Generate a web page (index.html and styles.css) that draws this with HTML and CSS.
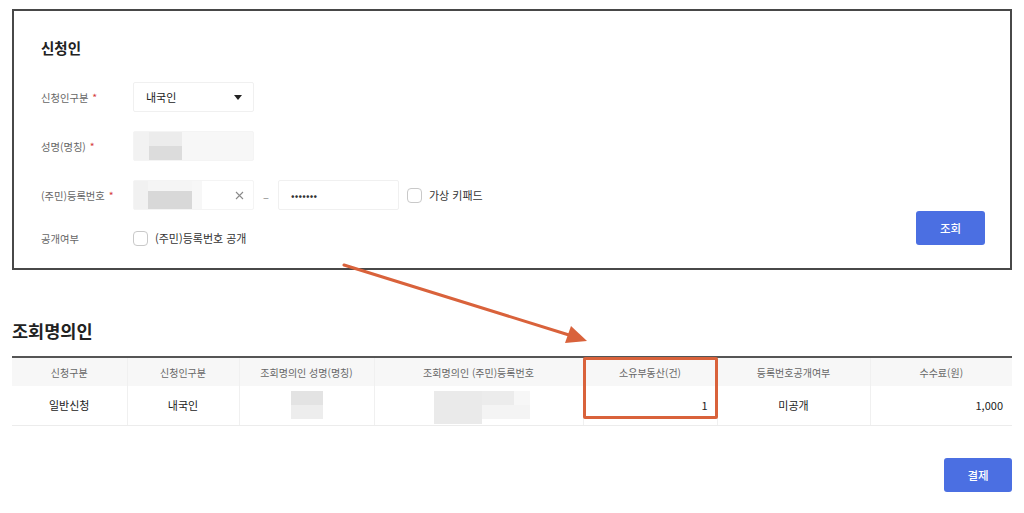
FILE: index.html
```html
<!DOCTYPE html>
<html lang="ko">
<head>
<meta charset="utf-8">
<title>신청인</title>
<link rel="stylesheet" href="styles.css">
</head>
<body>
<div class="page">
  <section class="panel">
    <div class="form">
      <h2 class="panel-title">신청인</h2>
      <div class="row">
        <div class="label">신청인구분 <span class="req">*</span></div>
        <div class="field select">
          <span>내국인</span>
          <span class="caret"></span>
        </div>
      </div>
      <div class="row">
        <div class="label">성명(명칭) <span class="req">*</span></div>
        <div class="field blur-name"></div>
      </div>
      <div class="row">
        <div class="label">(주민)등록번호 <span class="req">*</span></div>
        <div class="field blur-id">
          <span class="clear">
            <svg width="9" height="9" viewBox="0 0 9 9"><path d="M1 1L8 8M8 1L1 8" stroke="#8a8a8a" stroke-width="1.1" fill="none"/></svg>
          </span>
        </div>
        <span class="dash">–</span>
        <div class="field pw"><span class="dots">•••••••</span></div>
        <label class="check"><span class="box"></span><span class="check-text">가상 키패드</span></label>
      </div>
      <div class="row row-short">
        <div class="label">공개여부</div>
        <label class="check"><span class="box"></span><span class="check-text">(주민)등록번호 공개</span></label>
      </div>
    </div>
    <button class="btn btn-search">조회</button>
  </section>

  <section class="result">
    <h2 class="result-title">조회명의인</h2>
    <div class="table-wrap">
      <table class="grid">
        <colgroup>
          <col class="c1"><col class="c2"><col class="c3"><col class="c4"><col class="c5"><col class="c6"><col class="c7">
        </colgroup>
        <thead>
          <tr>
            <th>신청구분</th>
            <th>신청인구분</th>
            <th>조회명의인 성명(명칭)</th>
            <th>조회명의인 (주민)등록번호</th>
            <th>소유부동산(건)</th>
            <th>등록번호공개여부</th>
            <th>수수료(원)</th>
          </tr>
        </thead>
        <tbody>
          <tr>
            <td>일반신청</td>
            <td>내국인</td>
            <td><span class="mosaic m-name"></span></td>
            <td><span class="mosaic m-id"></span></td>
            <td class="num">1</td>
            <td>미공개</td>
            <td class="num">1,000</td>
          </tr>
        </tbody>
      </table>
      <div class="highlight"></div>
    </div>
    <div class="actions">
      <button class="btn btn-pay">결제</button>
    </div>
  </section>

  <svg class="arrow" width="1024" height="513" viewBox="0 0 1024 513">
    <line x1="344" y1="265" x2="569" y2="335" stroke="#d9623b" stroke-width="3" stroke-linecap="round"/>
    <polygon points="587,341 565,343 571,326" fill="#d9623b"/>
  </svg>
</div>
</body>
</html>
```

FILE: styles.css
```css
* { box-sizing: border-box; }
html, body {
  margin: 0;
  padding: 0;
  background: #fff;
}
body {
  font-family: "Noto Sans CJK KR", "Noto Sans", sans-serif;
  color: #333;
}
.page {
  position: relative;
  width: 1024px;
  height: 513px;
  overflow: hidden;
  padding-top: 9px;
}
.panel {
  margin: 0 12px 0 12px;
  width: 1000px;
  height: 261px;
  border: 2px solid #484848;
  padding: 26px 25px 22px 27px;
  display: flex;
  justify-content: space-between;
  align-items: flex-end;
}
.form {
  display: flex;
  flex-direction: column;
}
.panel-title {
  margin: 0 0 24px 0;
  font-size: 14.5px;
  line-height: 20px;
  font-weight: 700;
  color: #222;
}
.row {
  display: flex;
  align-items: center;
  height: 30px;
  margin-bottom: 19px;
}
.row-short {
  height: 16px;
  margin-bottom: 0;
  margin-top: 1px;
}
.label {
  width: 92px;
  font-size: 10.3px;
  color: #666;
  white-space: nowrap;
}
.req {
  color: #d43a3a;
  margin-left: 1px;
}
.field {
  width: 121px;
  height: 30px;
  border: 1px solid #f0f0f0;
  border-radius: 2px;
  background: #fff;
  display: flex;
  align-items: center;
  padding: 0 11px 0 12px;
  font-size: 11px;
  color: #222;
}
.select {
  justify-content: space-between;
}
.caret {
  width: 0;
  height: 0;
  border-left: 4px solid transparent;
  border-right: 4px solid transparent;
  border-top: 5px solid #222;
}
.blur-name {
  border-color: #f4f4f4;
  background:
    linear-gradient(#ececec, #ececec) 15px 0 / 33px 14px no-repeat,
    linear-gradient(#dcdcdc, #dcdcdc) 15px 14px / 33px 16px no-repeat,
    linear-gradient(#f2f2f2, #f2f2f2) 0 0 / 15px 30px no-repeat,
    #f7f7f7;
}
.blur-id {
  justify-content: flex-end;
  padding-right: 9px;
  border-color: #f4f4f4;
  background:
    linear-gradient(#d8d8d8, #d8d8d8) 14px 10px / 44px 19px no-repeat,
    linear-gradient(#f1f1f1, #f1f1f1) 0 0 / 14px 30px no-repeat,
    linear-gradient(#f5f5f5, #f5f5f5) 14px 0 / 44px 10px no-repeat,
    linear-gradient(#f7f7f7, #f7f7f7) 58px 0 / 10px 30px no-repeat,
    #fff;
}
.clear {
  display: flex;
}
.dash {
  width: 24px;
  text-align: center;
  color: #888;
  font-size: 11px;
  padding-top: 3px;
}
.pw {
  width: 121px;
}
.dots {
  font-size: 10.5px;
  letter-spacing: 0.2px;
  color: #333;
}
.check {
  display: flex;
  align-items: center;
  margin-left: 8px;
}
.row-short .check {
  margin-left: 0;
}
.box {
  width: 15px;
  height: 15px;
  border: 1px solid #c9c9c9;
  border-radius: 4px;
  background: #fff;
}
.check-text {
  margin-left: 7px;
  font-size: 11px;
  color: #333;
}
.btn {
  border: none;
  border-radius: 3px;
  background: #4b6fe2;
  color: #fff;
  font-family: "Noto Sans CJK KR", "Noto Sans", sans-serif;
  font-size: 11.5px;
  font-weight: 500;
  height: 34px;
  width: 69px;
  padding: 0;
}
.btn-search {
  margin-bottom: 1px;
}
.result {
  margin: 0 12px;
  width: 1000px;
}
.result-title {
  margin: 48px 0 0 0;
  font-size: 17.5px;
  line-height: 25px;
  font-weight: 700;
  color: #222;
  height: 38px;
}
.table-wrap {
  position: relative;
}
.grid {
  width: 1000px;
  border-collapse: collapse;
  table-layout: fixed;
  border-top: 2px solid #555;
}
.c1 { width: 115px; }
.c2 { width: 112px; }
.c3 { width: 135px; }
.c4 { width: 209px; }
.c5 { width: 134px; }
.c6 { width: 153px; }
.c7 { width: 142px; }
.grid th {
  height: 29px;
  background: #f7f7f7;
  font-size: 10px;
  font-weight: 400;
  color: #666;
  text-align: center;
  padding: 0;
  border-left: 1px solid #f0f0f0;
}
.grid td {
  height: 39px;
  font-size: 11px;
  font-weight: 400;
  color: #222;
  text-align: center;
  padding: 0;
  border-left: 1px solid #f0f0f0;
  border-bottom: 1px solid #ececec;
}
.grid th:first-child, .grid td:first-child { border-left: none; }
.grid td.num {
  text-align: right;
  padding-right: 9px;
  font-weight: 400;
}
.mosaic {
  display: inline-block;
  vertical-align: middle;
}
.m-name {
  width: 32px;
  height: 28px;
  background:
    linear-gradient(#e3e3e3, #e3e3e3) 0 0 / 32px 14px no-repeat,
    #ededed;
}
.m-id {
  width: 96px;
  height: 33px;
  margin-top: 5px;
  margin-left: 6px;
  background:
    linear-gradient(#eaeaea, #eaeaea) 0 0 / 48px 33px no-repeat,
    linear-gradient(#ececec, #ececec) 48px 0 / 32px 14px no-repeat,
    linear-gradient(#f4f4f4, #f4f4f4) 48px 14px / 48px 14px no-repeat,
    linear-gradient(#f7f7f7, #f7f7f7) 80px 0 / 16px 14px no-repeat;
}
.highlight {
  position: absolute;
  left: 571px;
  top: 1px;
  width: 135px;
  height: 62px;
  border: 3px solid #d9623b;
  border-radius: 2px;
  pointer-events: none;
}
.actions {
  display: flex;
  justify-content: flex-end;
  margin-top: 32px;
}
.btn-pay {
  width: 68px;
  height: 34px;
}
.arrow {
  position: absolute;
  left: 0;
  top: 0;
  pointer-events: none;
}
```
